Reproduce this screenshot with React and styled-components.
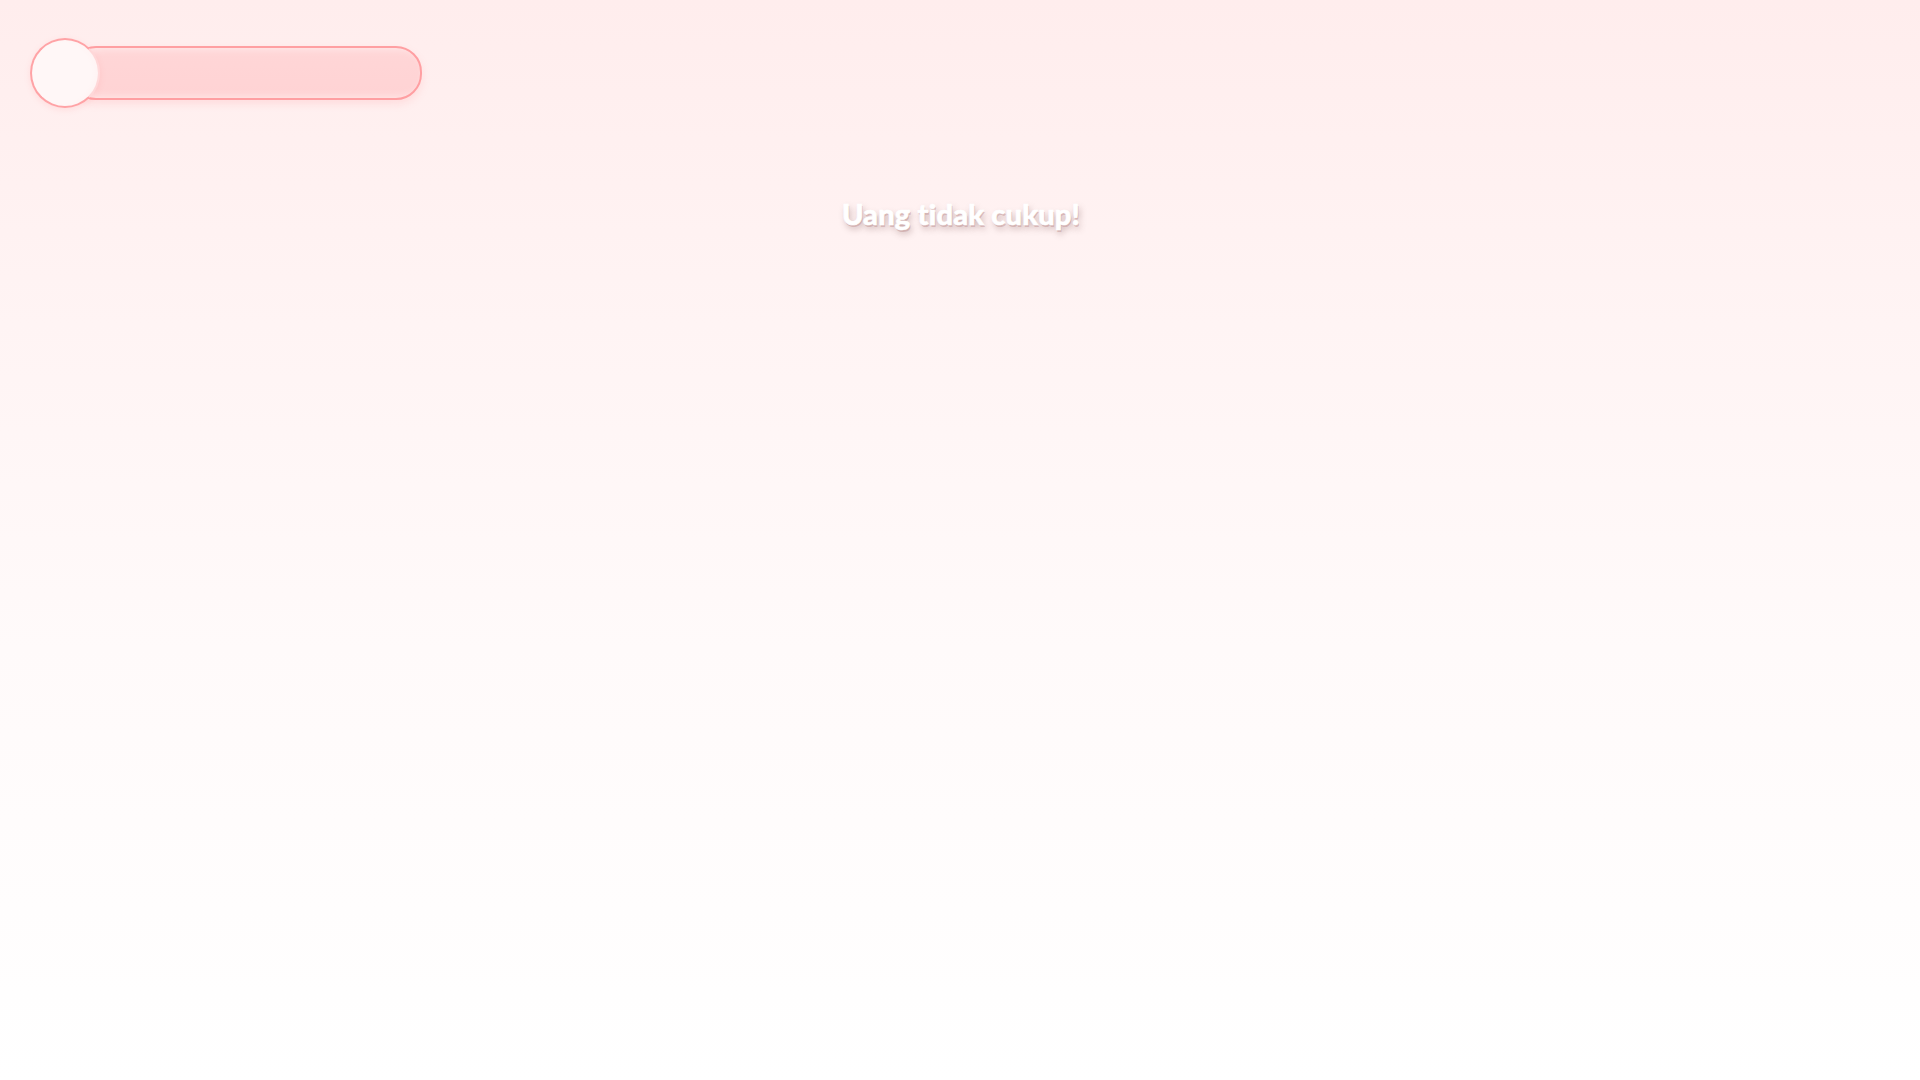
import styled, { createGlobalStyle } from "styled-components";

const GlobalStyle = createGlobalStyle`
  html, body {
    margin: 0;
    padding: 0;
    height: 100%;
  }
  #root {
    height: 100%;
  }
`;

const Screen = styled.div`
  width: 1920px;
  height: 1080px;
  overflow: hidden;
  background: linear-gradient(180deg, #ffeded 0%, #fff4f4 30%, #fffafa 60%, #ffffff 100%);
  font-family: Lato, "Open Sans", sans-serif;
  display: flex;
  flex-direction: column;
`;

const Hud = styled.div`
  padding: 38px 0 0 30px;
  display: flex;
  align-items: center;
`;

const Meter = styled.div`
  display: flex;
  align-items: center;
`;

const Coin = styled.div`
  width: 66px;
  height: 66px;
  border-radius: 50%;
  background: radial-gradient(circle at 45% 50%, #fff7f7 60%, #ffeeee 100%);
  border: 2px solid #ffa3a6;
  border-right-color: rgba(255, 163, 166, 0.35);
  box-shadow: 0 2px 6px rgba(255, 120, 125, 0.15);
  position: relative;
  z-index: 2;
`;

const Track = styled.div`
  width: 348px;
  height: 50px;
  margin-left: -30px;
  border-radius: 26px;
  background: linear-gradient(180deg, #ffd6d7 0%, #ffd3d4 100%);
  border: 2px solid #ff9fa2;
  box-shadow: inset 6px 0 10px rgba(255, 255, 255, 0.6), 0 4px 8px rgba(255, 140, 145, 0.18);
`;

const Toast = styled.div`
  margin-top: 88px;
  align-self: center;
  padding-left: 2px;
  font-size: 29px;
  font-weight: 900;
  color: #ffffff;
  letter-spacing: 0.2px;
  -webkit-text-stroke: 0.6px #ffffff;
  text-shadow: 1px 2px 0 rgba(190, 140, 140, 0.45), 2px 4px 6px rgba(110, 70, 70, 0.35);
`;

export default function App() {
  return (
    <>
      <GlobalStyle />
      <Screen>
        <Hud>
          <Meter>
            <Coin />
            <Track />
          </Meter>
        </Hud>
        <Toast>Uang tidak cukup!</Toast>
      </Screen>
    </>
  );
}
